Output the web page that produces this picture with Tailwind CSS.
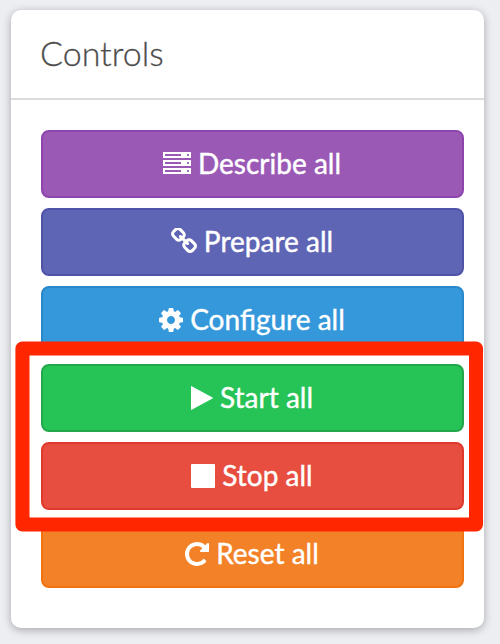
<!DOCTYPE html>
<html lang="en">
<head>
<meta charset="utf-8">
<title>Controls</title>
<script src="https://cdn.jsdelivr.net/npm/@tailwindcss/browser@4"></script>
</head>
<body class="relative h-[644px] w-[500px] overflow-hidden bg-[#edeef2] pt-2.5 pl-[11px] font-['Lato',sans-serif]">
<section class="h-[618px] w-[473px] rounded-[10px] bg-white shadow-[0_2px_8px_rgba(0,0,0,0.3)]">
  <header class="flex h-[90px] items-center border-b-2 border-[#dcdcdc] pb-0.5 pl-[29px]">
    <h1 class="text-[34px] leading-[44px] font-light text-[#4d4d4d] [-webkit-text-stroke:0.3px_#4d4d4d]">Controls</h1>
  </header>
  <div class="flex flex-col gap-2.5 pt-[30px] pr-5 pl-[30px] text-[28px] leading-[34px] text-white [-webkit-text-stroke:0.4px_#fff]">
    <button class="flex h-[68px] items-center justify-center gap-[7px] rounded-lg border-2 border-[#8e44ad] bg-[#9b59b6] pr-px">
      <svg class="mb-0.5 h-[22px] w-7" viewBox="0 0 28 22" fill="#fff"><path fill-rule="evenodd" d="M0 0h28v6H0zM2 2v2h16V2zM24 2.500v1l.5.5h1l.5-.5v-1l-.5-.5h-1zM0 8h28v6H0zM2 10v2h16v-2zM24 10.500v1l.5.5h1l.5-.5v-1l-.5-.5h-1zM0 16h28v6H0zM2 18v2h16v-2zM24 18.500v1l.5.5h1l.5-.5v-1l-.5-.5h-1z"/></svg>
      <span class="pb-0.5">Describe all</span>
    </button>
    <button class="flex h-[68px] items-center justify-center gap-[7px] rounded-lg border-2 border-[#4e53a8] bg-[#5f65b5] pr-px">
      <svg class="mb-0.5 h-[26px] w-[26px]" viewBox="80 80 1632 1632" fill="#fff"><path d="M1520 1216q0-40-28-68l-208-208q-28-28-68-28-42 0-72 32 3 3 19 18.500t21.500 21.500 15 19 13 25.500 3.500 27.500q0 40-28 68t-68 28q-15 0-27.500-3.500t-25.500-13-19-15-21.500-21.500-18.500-19q-33 31-33 73 0 40 28 68l206 207q27 27 68 27 40 0 68-26l147-146q28-28 28-67zm-703-705q0-40-28-68l-206-207q-28-28-68-28-39 0-68 27l-147 146q-28 28-28 67 0 40 28 68l208 208q27 27 68 27 42 0 72-31-3-3-19-18.500t-21.500-21.500-15-19-13-25.500-3.500-27.500q0-40 28-68t68-28q15 0 27.500 3.500t25.500 13 19 15 21.500 21.500 18.500 19q33-31 33-73zm895 705q0 120-85 203l-147 146q-83 83-203 83-121 0-204-85l-206-207q-83-83-83-203 0-123 88-209l-88-88q-86 88-208 88-120 0-204-84l-208-208q-84-84-84-204t85-203l147-146q83-83 203-83 121 0 204 85l206 207q83 83 83 203 0 123-88 209l88 88q86-88 208-88 120 0 204 84l208 208q84 84 84 204z"/></svg>
      <span class="pb-0.5">Prepare all</span>
    </button>
    <button class="flex h-[68px] items-center justify-center gap-[7px] rounded-lg border-2 border-[#2888c9] bg-[#3498db] pr-px">
      <svg class="h-6 w-6" viewBox="128 128 1536 1536" fill="#fff"><path d="M1152 896q0-106-75-181t-181-75-181 75-75 181 75 181 181 75 181-75 75-181zm512-109v222q0 12-8 23t-20 13l-185 28q-19 54-39 91 35 50 107 138 10 12 10 25t-9 23q-27 37-99 108t-94 71q-12 0-26-9l-138-108q-44 23-91 38-16 136-29 186-7 28-36 28h-222q-14 0-24.500-8.500t-11.500-21.500l-28-184q-49-16-90-37l-141 107q-10 9-25 9-14 0-25-11-126-114-165-168-7-10-7-23 0-12 8-23 15-21 51-66.500t54-70.500q-27-50-41-99l-183-27q-13-2-21-12.500t-8-23.500v-222q0-12 8-23t19-13l186-28q14-46 39-92-40-57-107-138-10-12-10-24 0-10 9-23 26-36 98.500-107.500t94.500-71.500q13 0 26 10l138 107q44-23 91-38 16-136 29-186 7-28 36-28h222q14 0 24.500 8.500t11.500 21.500l28 184q49 16 90 37l142-107q9-9 24-9 13 0 25 10 129 119 165 170 7 8 7 22 0 12-8 23-15 21-51 66.500t-54 70.500q26 50 41 98l183 28q13 2 21 12.500t8 23.500z"/></svg>
      <span class="pb-0.5">Configure all</span>
    </button>
    <button class="flex h-[68px] items-center justify-center gap-[7px] rounded-lg border-2 border-[#22a84b] bg-[#26c356] pr-px">
      <svg class="h-6 w-[22px]" viewBox="0 0 22 24" fill="#fff"><path d="M0 .5Q0-.2.7.2L21.500 11.500Q22.300 12 21.500 12.500L.7 23.800Q0 24.200 0 23.500z"/></svg>
      <span class="pb-0.5">Start all</span>
    </button>
    <button class="flex h-[68px] items-center justify-center gap-[7px] rounded-lg border-2 border-[#e0382a] bg-[#e84e3f] pr-px">
      <svg class="h-6 w-6" viewBox="0 0 24 24" fill="#fff"><rect width="24" height="24" rx="1"/></svg>
      <span class="pb-0.5">Stop all</span>
    </button>
    <button class="flex h-[68px] items-center justify-center gap-[7px] rounded-lg border-2 border-[#f0730f] bg-[#f28127] pr-px">
      <svg class="h-6 w-6" viewBox="128 128 1536 1536" fill="#fff"><path d="M1664 256v448q0 26-19 45t-45 19h-448q-42 0-59-40-17-39 14-69l138-138q-148-137-349-137-104 0-198.500 40.500t-163.500 109.500-109.500 163.500-40.500 198.500 40.500 198.500 109.500 163.500 163.500 109.500 198.500 40.500q119 0 225-52t179-147q7-10 23-12 15 0 25 9l137 138q9 8 9.500 20.500t-7.500 22.500q-109 132-264 204.500t-327 72.500q-156 0-298-61t-245-164-164-245-61-298 61-298 164-245 245-164 298-61q147 0 284.500 55.500t244.500 156.500l130-129q29-31 70-14 39 17 39 59z"/></svg>
      <span class="pb-0.5">Reset all</span>
    </button>
  </div>
</section>
<svg class="pointer-events-none absolute top-0 left-0" width="500" height="644" viewBox="0 0 500 644"><path fill="#ff2600" fill-rule="evenodd" d="M22.400 341.400H476a7 7 0 0 1 7 7V524.600a7 7 0 0 1-7 7H22.400a7 7 0 0 1-7-7V348.400a7 7 0 0 1 7-7zM29.500 355.500V517.400H469V355.500z"/></svg>
</body>
</html>
